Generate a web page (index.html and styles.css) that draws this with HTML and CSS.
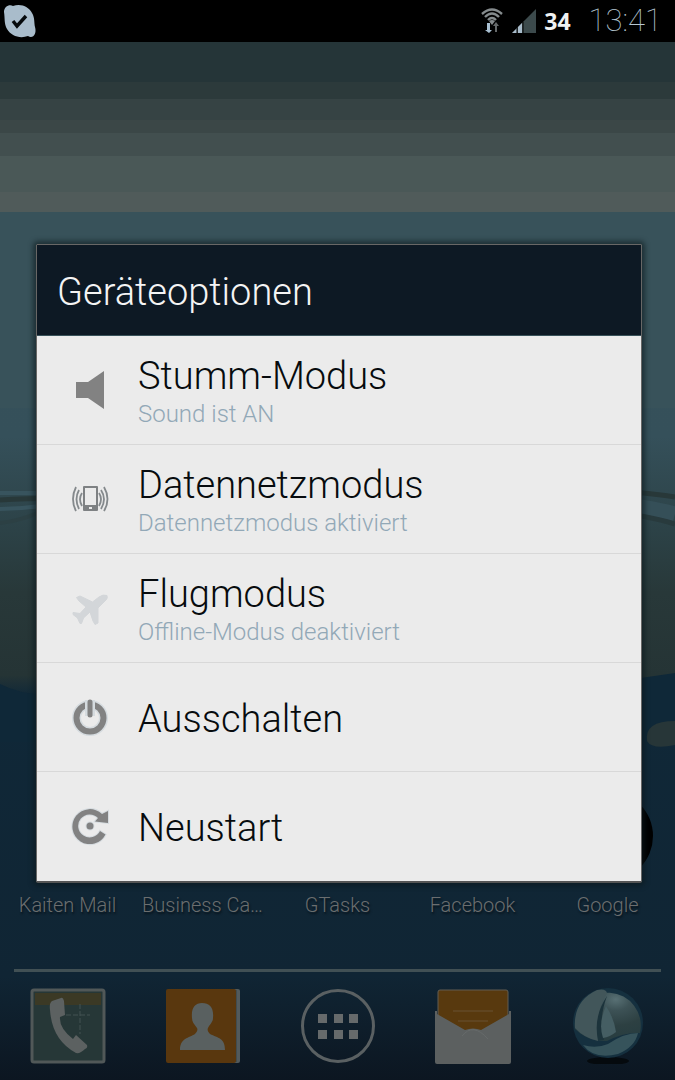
FILE: index.html
```html
<!DOCTYPE html>
<html lang="de">
<head>
    <meta charset="UTF-8">
    <meta name="viewport" content="width=device-width, initial-scale=1.0">
    <title>Geräteoptionen</title>
    <link rel="stylesheet" href="styles.css">
</head>
<body>
    <header class="statusbar">
        <svg class="notification" viewBox="0 0 36 36" aria-hidden="true">
            <path fill="#a9bccb" d="M2 9C2 4 7 1 11 3C19 0 27 4 30 10C33 15 32 20 33 24C35 31 31 36 26 33C18 36 9 33 5 26C2 21 3 15 2 9Z"/>
            <path fill="none" stroke="#05090c" stroke-width="3.4" d="M11 18L15 23L24 13"/>
        </svg>
        <div class="status-icons">
            <svg width="24" height="26" viewBox="0 0 24 26" aria-hidden="true">
                <g fill="none" stroke="#858b8d" stroke-width="2.4">
                    <path d="M2 6Q12 -3 22 6"/>
                    <path d="M5 9Q12 2 19 9"/>
                    <path d="M8 12Q12 8 16 12"/>
                </g>
                <path fill="#858b8d" d="M9 13Q12 11 15 13L12 17Z"/>
                <path fill="#a9c0d2" d="M7 15H10V22H12L9 25L5 22H7Z"/>
                <path fill="#65696a" d="M15 24V18H13L16 14L19 18H17V24Z"/>
            </svg>
            <svg width="24" height="24" viewBox="0 0 24 24" aria-hidden="true">
                <path fill="#3c4a4c" d="M0 24L24 0V24Z"/>
                <path fill="#a9bccb" d="M0 24L5 19V24ZM6 24V18L10 14V24Z"/>
                <path stroke="#000" d="M11 13V24M5 19V24"/>
            </svg>
            <span class="battery">34</span>
            <time class="clock">13:41</time>
        </div>
    </header>

    <main class="screen">
        <svg class="wallpaper" viewBox="0 0 675 1038" preserveAspectRatio="none" aria-hidden="true">
            <defs>
                <linearGradient id="sea" x1="0" y1="0" x2="0" y2="1">
                    <stop offset="0" stop-color="#38525a"/>
                    <stop offset="0.38" stop-color="#35505a"/>
                    <stop offset="0.47" stop-color="#2c4247"/>
                    <stop offset="0.53" stop-color="#283839"/>
                    <stop offset="0.61" stop-color="#253435"/>
                    <stop offset="0.63" stop-color="#102838"/>
                    <stop offset="0.9" stop-color="#102534"/>
                    <stop offset="1" stop-color="#0c1621"/>
                </linearGradient>
            </defs>
            <rect width="675" height="1038" fill="url(#sea)"/>
            <rect width="675" height="40" fill="#253538"/>
            <rect y="40" width="675" height="17" fill="#2c3a3b"/>
            <rect y="57" width="675" height="21" fill="#364344"/>
            <rect y="78" width="675" height="13" fill="#3b4747"/>
            <rect y="91" width="675" height="23" fill="#424f4f"/>
            <rect y="114" width="675" height="36" fill="#4a5857"/>
            <rect y="150" width="675" height="20" fill="#505b5a"/>
            <rect y="170" width="675" height="196" fill="#38525a"/>
            <!-- ripples and the dark shore line -->
            <path fill="none" stroke="#283839" stroke-width="5" d="M0 458Q40 455 120 457M600 448Q645 450 675 455"/>
            <path fill="none" stroke="#38545e" stroke-width="4" d="M0 451H40M0 467Q20 467 40 464"/>
            <path fill="none" stroke="#2c4044" stroke-width="4" d="M0 481Q20 479 40 470"/>
            <path fill="none" stroke="#354f58" stroke-width="15" d="M600 460Q650 465 675 472"/>
            <path fill="none" stroke="#283a3d" stroke-width="5" d="M600 468Q650 474 675 482"/>
            <path fill="#0f2838" d="M0 642Q20 652 40 652V700H0ZM641 636L675 631V700H641Z"/>
            <path fill="#273638" d="M675 679Q644 679 647 699Q652 708 675 703Z"/>
        </svg>

        <nav class="apps">
            <a class="app" href="#kaiten"><span class="app-icon"></span>Kaiten Mail</a>
            <a class="app" href="#business"><span class="app-icon"></span>Business Ca…</a>
            <a class="app" href="#gtasks"><span class="app-icon"></span>GTasks</a>
            <a class="app" href="#facebook"><span class="app-icon"></span>Facebook</a>
            <a class="app" href="#google"><span class="app-icon app-icon-dark"></span>Google</a>
        </nav>

        <nav class="dock">
            <a class="dock-item" href="#telefon" aria-label="Telefon">
                <svg viewBox="0 0 76 76" aria-hidden="true">
                    <rect x="2" y="2" width="72" height="72" rx="2" fill="#263737" stroke="#515858" stroke-width="3"/>
                    <rect x="5" y="5" width="66" height="12" fill="#3b3925"/>
                    <path stroke="#435252" stroke-dasharray="5 2" d="M36 27H60M50 16V46"/>
                    <path fill="#5c6161" d="M31 10Q33 9 34 13L35 27L30 29Q29 40 43 51L46 47L57 57Q58 60 55 61Q50 66 46 65Q22 52 20 22Q19 15 22 13Z"/>
                </svg>
            </a>
            <a class="dock-item" href="#kontakte" aria-label="Kontakte">
                <svg viewBox="0 0 76 76" aria-hidden="true">
                    <rect x="4" y="1" width="71" height="74" rx="2" fill="#525a5c"/>
                    <path stroke="#303e42" d="M71 2V74"/>
                    <rect x="1" y="1" width="70" height="74" rx="2" fill="#59370e"/>
                    <path fill="#596060" d="M37 15C45 15 49 20 48 30C48 34 45 36 43 40C42 42 43 44 45 46C53 50 60 50 60 62H15C15 50 24 50 30 46C32 44 33 42 32 40C29 36 27 34 27 30C26 20 30 15 37 15Z"/>
                </svg>
            </a>
            <a class="dock-item" href="#apps" aria-label="Alle Apps">
                <svg viewBox="0 0 76 76" aria-hidden="true">
                    <circle cx="38" cy="38" r="35.5" fill="none" stroke="#5a6062" stroke-width="3"/>
                    <path fill="#666a6b" d="M18 26h9v9h-9zM34 26h9v9h-9zM49 26h9v9h-9zM18 42h9v9h-9zM34 42h9v9h-9zM49 42h9v9h-9z"/>
                </svg>
            </a>
            <a class="dock-item" href="#email" aria-label="E-Mail">
                <svg viewBox="0 0 76 76" aria-hidden="true">
                    <rect x="3" y="2" width="70" height="50" rx="2" fill="#58390e" stroke="#615d53"/>
                    <path stroke="#685233" d="M18 23H58M23 33H53"/>
                    <path fill="#5c6060" d="M0 23H2V26L30 42Q38 39 46 42L74 26V23H76V74Q76 76 74 76H2Q0 76 0 74Z"/>
                    <path fill="none" stroke="#666a6a" d="M27 48Q38 34 53 51"/>
                </svg>
            </a>
            <a class="dock-item" href="#browser" aria-label="Browser">
                <svg viewBox="0 0 76 76" aria-hidden="true">
                    <defs>
                        <radialGradient id="globe" cx="0.62" cy="0.14" r="0.9">
                            <stop offset="0" stop-color="#587074"/>
                            <stop offset="0.25" stop-color="#3d5256"/>
                            <stop offset="0.6" stop-color="#2d4042"/>
                            <stop offset="1" stop-color="#263c40"/>
                        </radialGradient>
                    </defs>
                    <ellipse cx="38" cy="73" rx="21" ry="4" fill="#050a0e"/>
                    <circle cx="38" cy="35" r="35" fill="#15303f"/>
                    <path fill="url(#globe)" d="M5 41A33 33 0 1 1 70 45Q54 44 37 53Q18 54 5 41Z"/>
                    <path fill="#42565a" d="M5 40Q3 13 27 2Q36 0 37 5Q25 24 28 53Q14 50 5 40Z"/>
                    <path fill="#1c333b" d="M37 8Q23 29 28 52L34 52Q28 32 37 8Z"/>
                    <path fill="#455e63" d="M36 18Q44 30 46 44Q40 49 33 50Q28 35 36 18Z"/>
                    <path fill="#36535b" d="M13 57Q26 61 38 56Q54 45 68 45Q65 59 48 66Q24 72 13 57Z"/>
                </svg>
            </a>
        </nav>

        <div class="overlay">
            <section class="dialog" role="dialog" aria-labelledby="dialog-title">
                <h1 class="dialog-title" id="dialog-title">Geräteoptionen</h1>
                <button type="button" class="option">
                    <svg class="option-icon" viewBox="0 0 40 40" aria-hidden="true">
                        <path fill="#828282" d="M6 12H18L34 1V39L18 28H6Z"/>
                    </svg>
                    <span class="option-text">
                        <span class="option-name">Stumm-Modus</span>
                        <span class="option-state">Sound ist AN</span>
                    </span>
                </button>
                <button type="button" class="option">
                    <svg class="option-icon" viewBox="0 0 40 40" aria-hidden="true">
                        <rect x="13" y="7" width="15" height="25" rx="1" fill="#7e8183"/>
                        <rect x="15" y="9" width="11" height="17" fill="#ebebeb"/>
                        <rect x="19" y="28" width="3" height="2" fill="#ebebeb"/>
                        <path fill="none" stroke="#84898c" stroke-width="1.8" d="M6 8Q0 20 6 32M9 11Q4 20 9 30M12 14Q8 20 12 27M34 8Q41 20 34 32M31 11Q37 20 31 30M29 14Q33 20 29 27"/>
                    </svg>
                    <span class="option-text">
                        <span class="option-name">Datennetzmodus</span>
                        <span class="option-state">Datennetzmodus aktiviert</span>
                    </span>
                </button>
                <button type="button" class="option">
                    <svg class="option-icon" viewBox="0 0 40 40" aria-hidden="true">
                        <path fill="#d3d6d9" stroke="#d3d6d9" stroke-linejoin="round" d="M37 7.5Q33 6 29 9L22.5 14L10 8L6.5 9.5L9 13L16 19L10 25.5L3 24.5V26.5L7.5 30L10 35.5H11.5L13.5 30L20 24L23 33L25 36.5L28 35V20L36 12Q38 10 37 7.5Z"/>
                    </svg>
                    <span class="option-text">
                        <span class="option-name">Flugmodus</span>
                        <span class="option-state">Offline-Modus deaktiviert</span>
                    </span>
                </button>
                <button type="button" class="option">
                    <svg class="option-icon" viewBox="0 0 40 40" aria-hidden="true">
                        <circle cx="20" cy="21" r="13.5" fill="none" stroke="#d5dbdf" stroke-width="9"/>
                        <circle cx="20" cy="21" r="13.5" fill="none" stroke="#828282" stroke-width="6"/>
                        <path stroke="#d5dbdf" stroke-width="10" d="M20 3V19"/>
                        <path stroke="#828282" stroke-width="5" stroke-linecap="round" d="M20 5V18"/>
                    </svg>
                    <span class="option-text">
                        <span class="option-name">Ausschalten</span>
                    </span>
                </button>
                <button type="button" class="option">
                    <svg class="option-icon" viewBox="0 0 40 40" aria-hidden="true">
                        <g fill="#828282" stroke="#d5dbdf" stroke-width="2" paint-order="stroke">
                            <path d="M32 8A17.5 17.5 0 1 0 35.5 28.5L30 25A11.5 11.5 0 1 1 28 12L25 15.5L38 17V5Z"/>
                            <circle cx="20" cy="20" r="3.5"/>
                        </g>
                    </svg>
                    <span class="option-text">
                        <span class="option-name">Neustart</span>
                    </span>
                </button>
            </section>
        </div>
    </main>
</body>
</html>
```
FILE: styles.css
```css
* {
    box-sizing: border-box;
}

body {
    font-family: Roboto, "Noto Sans", sans-serif;
    font-weight: 300;
    background-color: #0c1621;
    margin: 0;
    min-height: 100vh;
    display: flex;
    flex-direction: column;
}

a {
    color: inherit;
    text-decoration: none;
}

.statusbar {
    height: 42px;
    padding: 0 13px 0 2px;
    background: #000;
    display: flex;
    align-items: center;
    justify-content: space-between;
}

.notification {
    width: 36px;
    height: 36px;
}

.status-icons {
    display: flex;
    align-items: center;
    gap: 8px;
}

.battery {
    font-family: "Open Sans", sans-serif;
    font-size: 23px;
    font-weight: 700;
    line-height: 40px;
    color: #f0f2f3;
}

.clock {
    font-size: 31px;
    font-weight: 100;
    line-height: 40px;
    color: #b6c6d2;
    margin-left: 10px;
}

.screen {
    position: relative;
    flex: 1;
    display: flex;
    flex-direction: column;
    justify-content: flex-end;
}

.wallpaper {
    position: absolute;
    inset: 0;
    width: 100%;
    height: 100%;
}

.apps {
    position: relative;
    display: grid;
    grid-template-columns: repeat(5, 1fr);
    padding-bottom: 52px;
}

.app {
    display: flex;
    flex-direction: column;
    align-items: center;
    gap: 12px;
    font-size: 20px;
    line-height: 24px;
    color: #6b6e6f;
    text-shadow: 1px 2px 2px #08131b;
    white-space: nowrap;
}

.app-icon {
    width: 90px;
    height: 90px;
    border-radius: 50%;
}

.app-icon-dark {
    background: #000;
}

.dock {
    position: relative;
    display: grid;
    grid-template-columns: repeat(5, 1fr);
    padding-bottom: 16px;
}

/* divider above the dock */
.dock::before {
    content: "";
    grid-column: 1 / -1;
    height: 3px;
    margin: 0 14px 16px;
    background: #415054;
}

.dock-item {
    display: flex;
    justify-content: center;
}

.dock-item svg {
    width: 76px;
    height: 76px;
}

.overlay {
    position: absolute;
    inset: 0;
    display: flex;
    align-items: center;
    padding: 4px 33px 0 36px;
}

.dialog {
    flex: 1;
    background: #ebebeb;
    border: 1px solid #686766;
    border-bottom: 2px solid #555;
    border-radius: 2px;
    box-shadow: 0 0 5px 3px rgba(12, 25, 29, 0.6);
}

.dialog-title {
    margin: 0;
    padding: 4px 20px 0;
    background: #0d1924;
    border-bottom: 1px solid #38525a;
    color: #f4f4f4;
    font-size: 38px;
    font-weight: 300;
    line-height: 86px;
}

.option {
    width: 100%;
    height: 109px;
    padding: 0 33px;
    display: flex;
    align-items: center;
    gap: 28px;
    background: none;
    border: 0;
    border-bottom: 1px solid #d8d8d8;
    font: inherit;
    color: #070b0e;
    text-align: left;
    cursor: pointer;
}

.option:last-child {
    border-bottom: 0;
}

.option-icon {
    flex: none;
    width: 40px;
    height: 40px;
}

.option-text {
    display: flex;
    flex-direction: column;
    padding-top: 4px;
}

.option-name {
    font-size: 38px;
    line-height: 44px;
}

.option-state {
    font-size: 24px;
    line-height: 32px;
    color: #92a8b7;
}
```
